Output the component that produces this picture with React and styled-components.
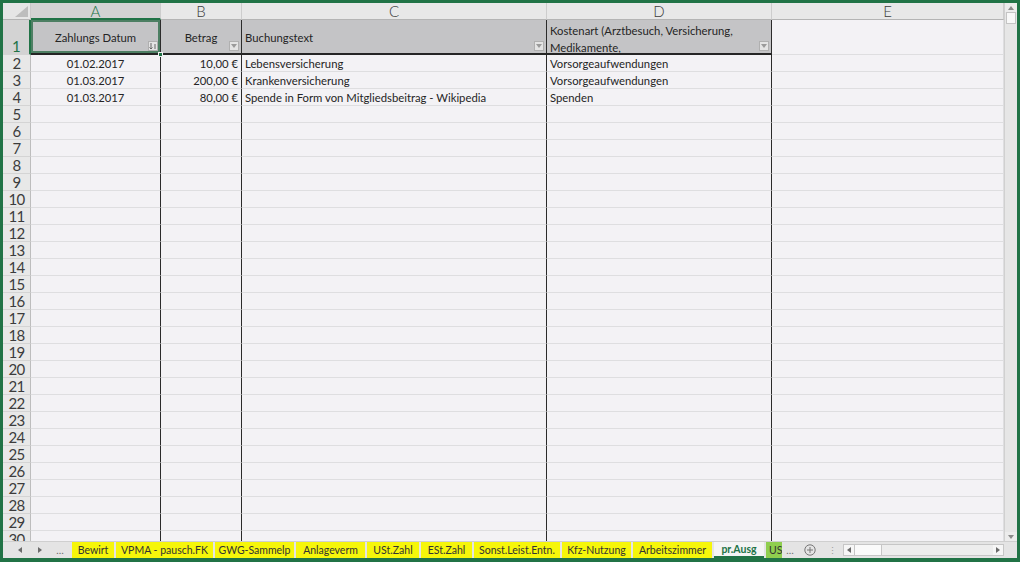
import React from "react";
import styled, { createGlobalStyle } from "styled-components";

const Global = createGlobalStyle`
  html, body { margin: 0; padding: 0; overflow: hidden; background: #217346; }
  * { box-sizing: border-box; }
`;

const FONT = `Lato, "Liberation Sans", Arial, sans-serif`;

const Frame = styled.div`
  width: 1020px;
  height: 562px;
  background: #217346;
  padding: 3px 3px 4px 3px;
  display: flex;
  flex-direction: column;
  font-family: ${FONT};
`;

const Workspace = styled.div`
  display: flex;
  height: 538px;
`;

const Sheet = styled.div`
  display: grid;
  grid-template-columns: 28px 130px 81px 305px 225px 232px;
  grid-template-rows: 17px 35px;
  grid-auto-rows: 17px;
  width: 1001px;
  height: 538px;
  overflow: hidden;
  background: #f3f2f5;
`;

const Corner = styled.div`
  background: #e6e6e6;
  border-right: 1px solid #c9c9c9;
  border-bottom: 1px solid #b4b4b4;
  display: flex;
  align-items: flex-end;
  justify-content: flex-end;
  padding: 0 2px 2px 0;
`;

const ColHead = styled.div`
  background: ${(p) => (p.$selected ? "#d3d3d3" : "#e8e8e8")};
  color: ${(p) => (p.$selected ? "#217346" : "#3c3c3c")};
  border-right: 1px solid #cdcdcd;
  border-bottom: ${(p) => (p.$selected ? "2px solid #217346" : "1px solid #b4b4b4")};
  display: flex;
  align-items: center;
  justify-content: center;
  font-size: 15px;
  font-weight: 300;
  padding-top: ${(p) => (p.$selected ? "1px" : "0")};
`;

const RowHead = styled.div`
  background: ${(p) => (p.$selected ? "#d3d3d3" : "#e8e8e8")};
  color: ${(p) => (p.$selected ? "#217346" : "#3c3c3c")};
  border-right: ${(p) => (p.$selected ? "2px solid #217346" : "1px solid #bdbdbd")};
  border-bottom: 1px solid #d4d4d4;
  display: flex;
  align-items: flex-end;
  justify-content: center;
  font-size: 15px;
  letter-spacing: -0.8px;
  line-height: 16px;
  font-weight: 400;
`;

const Cell = styled.div`
  background: #f3f2f5;
  border-right: 1px solid ${(p) => (p.$dark ? "#2b2b2b" : "#dedee0")};
  border-bottom: 1px solid #dedee0;
  display: flex;
  align-items: center;
  justify-content: ${(p) =>
    p.$align === "right" ? "flex-end" : p.$align === "center" ? "center" : "flex-start"};
  padding: 1px 3px 0 3px;
  font-size: 11.3px;
  color: #252525;
  white-space: nowrap;
  overflow: hidden;
`;

const HeadCell = styled.div`
  position: relative;
  background: #c4c4c6;
  border-right: 1px solid ${(p) => (p.$dark ? "#2b2b2b" : "#dedee0")};
  border-bottom: 2px solid #252525;
  display: flex;
  align-items: ${(p) => (p.$wrap ? "flex-start" : "center")};
  justify-content: ${(p) => (p.$align === "center" ? "center" : "flex-start")};
  padding: ${(p) => (p.$wrap ? "2px 14px 0 3px" : "2px 3px 0 3px")};
  font-size: 11.3px;
  line-height: 17px;
  color: #252525;
  white-space: ${(p) => (p.$wrap ? "normal" : "nowrap")};
  overflow: visible;
  box-shadow: ${(p) => (p.$selected ? "inset 0 0 0 2px #4d7f63" : "none")};
`;

const FilterBtn = styled.div`
  position: absolute;
  right: 2px;
  bottom: 2px;
  width: 10px;
  height: 10px;
  background: #e4e4e4;
  border: 1px solid #b0b0b0;
  display: flex;
  align-items: center;
  justify-content: center;
`;

const Handle = styled.div`
  position: absolute;
  right: -3px;
  bottom: -4px;
  width: 5px;
  height: 5px;
  background: #217346;
  border: 1px solid #f3f2f5;
  z-index: 2;
`;

const VScroll = styled.div`
  width: 13px;
  height: 538px;
  background: #e6e6e6;
  border-left: 1px solid #d0d0d0;
  display: flex;
  flex-direction: column;
`;

const ScrollArrow = styled.div`
  height: 9px;
  display: flex;
  align-items: center;
  justify-content: center;
  background: #ececec;
`;

const VThumb = styled.div`
  height: 12px;
  margin: 0 1px;
  background: #f8f8f8;
  border: 1px solid #c4c4c4;
`;

const VTrack = styled.div`
  flex: 1;
`;

const TabBar = styled.div`
  height: 17px;
  background: #e4e4e4;
  display: flex;
  align-items: stretch;
  padding-left: 7px;
  border-top: 1px solid #cfcfcf;
  font-size: 10.5px;
  color: #333;
`;

const NavBtn = styled.div`
  width: ${(p) => p.$w || 20}px;
  display: flex;
  align-items: center;
  justify-content: center;
  color: ${(p) => p.$color || "#555"};
  font-size: ${(p) => p.$size || 10}px;
  flex-shrink: 0;
`;

const Tabs = styled.div`
  display: flex;
  gap: 2px;
  margin-left: 2px;
`;

const Tab = styled.div`
  width: ${(p) => p.$w}px;
  background: ${(p) => (p.$active ? "#f4f4f4" : p.$bg)};
  color: ${(p) => (p.$active ? "#217346" : "#333")};
  font-weight: ${(p) => (p.$active ? 700 : 400)};
  border-bottom: ${(p) => (p.$active ? "2px solid #217346" : "none")};
  display: flex;
  align-items: center;
  justify-content: ${(p) => (p.$clip ? "flex-start" : "center")};
  padding-left: ${(p) => (p.$clip ? "3px" : "0")};
  white-space: nowrap;
  overflow: hidden;
  flex-shrink: 0;
`;

const HScroll = styled.div`
  flex: 1;
  margin: 2px 13px 2px 1px;
  background: #ededed;
  border: 1px solid #c6c6c6;
  display: flex;
  align-items: stretch;
`;

const HArrow = styled.div`
  width: 10px;
  display: flex;
  align-items: center;
  justify-content: center;
  background: #f6f6f6;
`;

const HThumb = styled.div`
  width: 28px;
  background: #fafafa;
  border-left: 1px solid #c6c6c6;
  border-right: 1px solid #c6c6c6;
`;

const HTrack = styled.div`
  flex: 1;
`;

const TriDown = ({ c = "#8a8a8a" }) => (
  <svg width="6" height="4" viewBox="0 0 6 4">
    <polygon points="0,0 6,0 3,4" fill={c} />
  </svg>
);
const TriUp = ({ c = "#8a8a8a" }) => (
  <svg width="6" height="4" viewBox="0 0 6 4">
    <polygon points="0,4 6,4 3,0" fill={c} />
  </svg>
);
const TriLeft = ({ c = "#6a6a6a" }) => (
  <svg width="4" height="6" viewBox="0 0 4 6">
    <polygon points="4,0 4,6 0,3" fill={c} />
  </svg>
);
const TriRight = ({ c = "#6a6a6a" }) => (
  <svg width="4" height="6" viewBox="0 0 4 6">
    <polygon points="0,0 0,6 4,3" fill={c} />
  </svg>
);

const SortIcon = () => (
  <svg width="8" height="8" viewBox="0 0 8 8">
    <path d="M2 1 V7 M0.5 5.5 L2 7 L3.5 5.5" stroke="#666" strokeWidth="1" fill="none" />
    <path d="M6 2 V7" stroke="#666" strokeWidth="1" />
  </svg>
);

const columns = ["A", "B", "C", "D", "E"];

const header = [
  { text: "Zahlungs Datum", align: "center", dark: true, sort: true, selected: true },
  { text: "Betrag", align: "center", dark: true },
  { text: "Buchungstext", align: "left", dark: true },
  { text: "Kostenart (Arztbesuch, Versicherung, Medikamente,", align: "left", dark: true, wrap: true },
];

const data = [
  ["01.02.2017", "10,00 €", "Lebensversicherung", "Vorsorgeaufwendungen"],
  ["01.03.2017", "200,00 €", "Krankenversicherung", "Vorsorgeaufwendungen"],
  ["01.03.2017", "80,00 €", "Spende in Form von Mitgliedsbeitrag - Wikipedia", "Spenden"],
];

const aligns = ["center", "right", "left", "left", "left"];

const tabs = [
  { name: "Bewirt", w: 42 },
  { name: "VPMA - pausch.FK", w: 97 },
  { name: "GWG-Sammelp", w: 79 },
  { name: "Anlageverm", w: 69 },
  { name: "USt.Zahl", w: 52 },
  { name: "ESt.Zahl", w: 51 },
  { name: "Sonst.Leist.Entn.", w: 86 },
  { name: "Kfz-Nutzung", w: 69 },
  { name: "Arbeitszimmer", w: 79 },
  { name: "pr.Ausg", w: 50, active: true },
  { name: "USt", w: 16, bg: "#8fce4e", clip: true },
];

export default function App() {
  const rows = [];
  for (let r = 2; r <= 30; r++) {
    const vals = data[r - 2] || [];
    rows.push(
      <React.Fragment key={r}>
        <RowHead>{r}</RowHead>
        {columns.map((c, i) => (
          <Cell key={c} $align={aligns[i]} $dark={i < 4}>
            {vals[i] || ""}
          </Cell>
        ))}
      </React.Fragment>
    );
  }

  return (
    <>
      <Global />
      <Frame>
        <Workspace>
          <Sheet>
            <Corner>
              <svg width="13" height="11" viewBox="0 0 13 11">
                <polygon points="13,0 13,11 0,11" fill="#bdbdbd" />
              </svg>
            </Corner>
            {columns.map((c, i) => (
              <ColHead key={c} $selected={i === 0}>
                {c}
              </ColHead>
            ))}
            <RowHead $selected>1</RowHead>
            {header.map((h, i) => (
              <HeadCell
                key={i}
                $align={h.align}
                $dark={h.dark}
                $wrap={h.wrap}
                $selected={h.selected}
              >
                {h.text}
                <FilterBtn>{h.sort ? <SortIcon /> : <TriDown c="#9a9a9a" />}</FilterBtn>
                {h.selected && <Handle />}
              </HeadCell>
            ))}
            <Cell />
            {rows}
          </Sheet>
          <VScroll>
            <ScrollArrow>
              <TriUp />
            </ScrollArrow>
            <VThumb />
            <VTrack />
            <ScrollArrow>
              <TriDown />
            </ScrollArrow>
          </VScroll>
        </Workspace>
        <TabBar>
          <NavBtn>
            <TriLeft />
          </NavBtn>
          <NavBtn>
            <TriRight />
          </NavBtn>
          <NavBtn $color="#666">…</NavBtn>
          <Tabs>
            {tabs.map((t) => (
              <Tab key={t.name} $w={t.w} $bg={t.bg || "#f6f60a"} $active={t.active} $clip={t.clip}>
                {t.name}
              </Tab>
            ))}
          </Tabs>
          <NavBtn $w={16} $color="#666">…</NavBtn>
          <NavBtn $w={24}>
            <svg width="12" height="12" viewBox="0 0 12 12">
              <circle cx="6" cy="6" r="5.2" stroke="#777" strokeWidth="1" fill="none" />
              <path d="M6 3 V9 M3 6 H9" stroke="#777" strokeWidth="1" />
            </svg>
          </NavBtn>
          <NavBtn $w={20} $color="#999" $size={9}>⋮</NavBtn>
          <HScroll>
            <HArrow>
              <TriLeft />
            </HArrow>
            <HThumb />
            <HTrack />
            <HArrow>
              <TriRight />
            </HArrow>
          </HScroll>
        </TabBar>
      </Frame>
    </>
  );
}
